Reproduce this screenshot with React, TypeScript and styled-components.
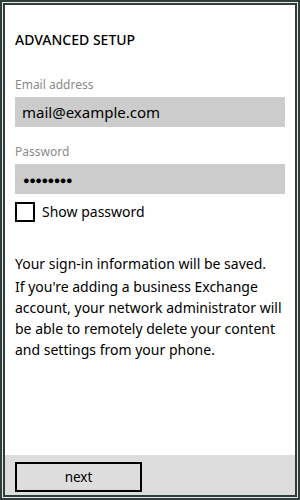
import styled, { createGlobalStyle } from 'styled-components'

const GlobalStyle = createGlobalStyle`
  html, body {
    margin: 0;
    padding: 0;
    background: #ffffff;
  }
  * {
    box-sizing: border-box;
  }
`

const Frame = styled.div`
  width: 300px;
  height: 500px;
  border: 2px solid #2f3e3a;
  padding: 1px;
  background: #e6e9e8;
  font-family: 'Noto Sans', 'Open Sans', sans-serif;
  color: #000;
`

const Screen = styled.div`
  display: flex;
  flex-direction: column;
  height: 100%;
  border: 2px solid #2f3e3a;
  background: #ffffff;
`

const Main = styled.main`
  flex-grow: 1;
  display: flex;
  flex-direction: column;
  padding: 25px 10px 0 10px;
`

const Title = styled.h2`
  margin: 0 0 27px 0;
  font-size: 14px;
  font-weight: 500;
  line-height: 20px;
`

const Label = styled.label`
  font-size: 12px;
  line-height: 16px;
  color: #8a8a8a;
  margin-bottom: 4px;
`

const Field = styled.div<{ $dots?: boolean }>`
  height: 30px;
  background: #cccccc;
  display: flex;
  align-items: center;
  padding-left: ${(p) => (p.$dots ? '8px' : '7px')};
  font-size: ${(p) => (p.$dots ? '11px' : '15px')};
  letter-spacing: ${(p) => (p.$dots ? '-0.5px' : '0')};
  margin-bottom: 17px;
`

const PasswordField = styled(Field)`
  margin-bottom: 8px;
  font-weight: 700;
`

const CheckRow = styled.div`
  display: flex;
  align-items: center;
  gap: 7px;
  font-size: 14px;
  line-height: 20px;
`

const Box = styled.span`
  width: 20px;
  height: 20px;
  border: 2px solid #000;
  background: #fff;
`

const Info = styled.div`
  margin-top: 31px;
  display: flex;
  flex-direction: column;
  gap: 2px;
  font-size: 14px;
  line-height: 21px;
`

const Para = styled.p`
  margin: 0;
`

const BottomBar = styled.footer`
  height: 40px;
  background: #dddddd;
  display: flex;
  align-items: flex-start;
  padding: 7px 10px 0 10px;
`

const NextButton = styled.button`
  width: 127px;
  height: 30px;
  border: 2px solid #000;
  background: #dddddd;
  font-family: 'Noto Sans', 'Open Sans', sans-serif;
  font-size: 13.5px;
  color: #000;
  padding: 0;
`

export default function App() {
  return (
    <>
      <GlobalStyle />
      <Frame>
        <Screen>
          <Main>
            <Title>ADVANCED SETUP</Title>
            <Label>Email address</Label>
            <Field>mail@example.com</Field>
            <Label>Password</Label>
            <PasswordField $dots>●●●●●●●●</PasswordField>
            <CheckRow>
              <Box />
              <span>Show password</span>
            </CheckRow>
            <Info>
              <Para>Your sign-in information will be saved.</Para>
              <Para>
                If you're adding a business Exchange account, your network administrator will be
                able to remotely delete your content and settings from your phone.
              </Para>
            </Info>
          </Main>
          <BottomBar>
            <NextButton>next</NextButton>
          </BottomBar>
        </Screen>
      </Frame>
    </>
  )
}
